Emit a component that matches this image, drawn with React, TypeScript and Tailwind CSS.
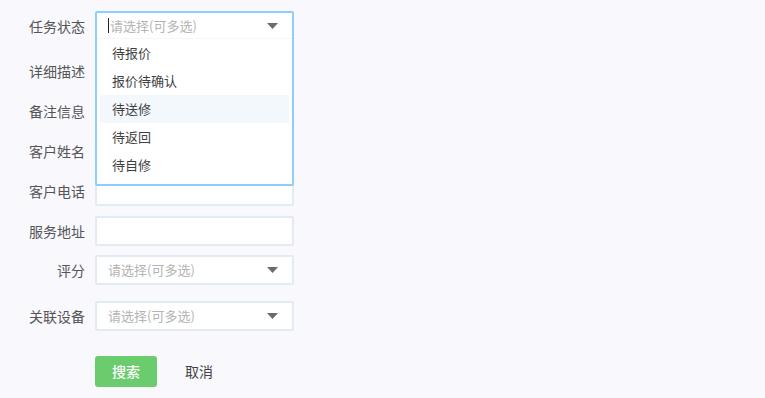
import React from "react";

const font = { fontFamily: '"Noto Sans CJK SC", "Noto Sans", sans-serif' };

const Caret = () => (
  <svg width="11" height="6" viewBox="0 0 11 6" className="shrink-0">
    <path d="M0 0 L11 0 L5.5 6 Z" fill="#6b6b6b" />
  </svg>
);

const Label: React.FC<{ text: string }> = ({ text }) => (
  <div className="w-[86px] shrink-0 pr-[1px] text-right text-[14px] leading-[20px] text-[#555]">{text}</div>
);

const TextInput = () => (
  <div className="h-[30px] w-[199px] rounded-[2px] border-2 border-[#e2eaf3] bg-white" />
);

const SelectBox = () => (
  <div className="flex h-[30px] w-[199px] items-center justify-between rounded-[2px] border-2 border-[#e2eaf3] bg-white pl-[11px] pr-[14px]">
    <span className="text-[13px] text-[#b4b4b4]">请选择(可多选)</span>
    <Caret />
  </div>
);

const statusOptions = ["待报价", "报价待确认", "待送修", "待返回", "待自修"];

const App: React.FC = () => {
  return (
    <div className="min-h-screen w-full bg-[#f8f8fd]" style={font}>
      <div className="pt-[11px]">
        {/* 任务状态 - open dropdown */}
        <div className="flex items-center">
          <Label text="任务状态" />
          <div className="relative ml-[9px] h-[30px] w-[199px]">
            <div className="absolute left-0 top-0 z-10 w-[199px] rounded-[2px] border-2 border-[#8ccffb] bg-white pb-[5px]">
              <div className="flex h-[26px] items-center justify-between border-b border-[#f6f6f6] pl-[11px] pr-[14px]">
                <span className="flex items-center text-[13px] text-[#b4b4b4]">
                  <span className="mr-[1px] inline-block h-[15px] w-[1px] bg-[#222]" />
                  请选择(可多选)
                </span>
                <Caret />
              </div>
              <div className="px-[3px]">
                {statusOptions.map((opt) => (
                  <div
                    key={opt}
                    className={`flex h-[28px] items-center pl-[12px] text-[13px] text-[#3f3f3f] ${
                      opt === "待送修" ? "bg-[#f3f8fc]" : ""
                    }`}
                  >
                    {opt}
                  </div>
                ))}
              </div>
            </div>
          </div>
        </div>

        {/* text inputs */}
        <div className="mt-[15px] flex flex-col gap-[10px]">
          {["详细描述", "备注信息", "客户姓名", "客户电话", "服务地址"].map((l) => (
            <div key={l} className="flex items-center">
              <Label text={l} />
              <div className="ml-[9px]">
                <TextInput />
              </div>
            </div>
          ))}
        </div>

        <div className="mt-[9px] flex items-center">
          <Label text="评分" />
          <div className="ml-[9px]">
            <SelectBox />
          </div>
        </div>

        <div className="mt-[16px] flex items-center">
          <Label text="关联设备" />
          <div className="ml-[9px]">
            <SelectBox />
          </div>
        </div>

        <div className="mt-[25px] flex items-center pl-[95px]">
          <button className="h-[31px] w-[62px] rounded-[3px] bg-[#6acc6c] text-[14px] font-medium text-white">
            搜索
          </button>
          <button className="ml-[28px] text-[14px] text-[#444]">取消</button>
        </div>
      </div>
    </div>
  );
};

export default App;
